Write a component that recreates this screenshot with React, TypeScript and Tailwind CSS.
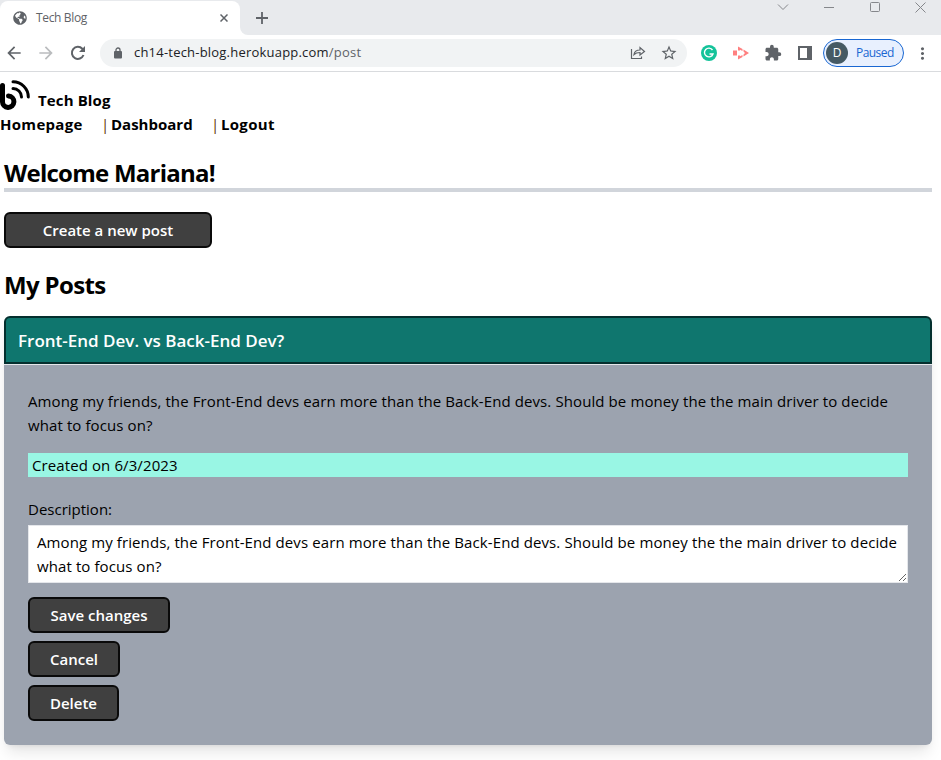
import { FaGlobeAmericas } from "react-icons/fa";
import { MdArrowBack, MdArrowForward, MdStarBorder, MdExtension, MdMoreVert } from "react-icons/md";
import type { ReactNode } from "react";

const postText =
  "Among my friends, the Front-End devs earn more than the Back-End devs. Should be money the the main driver to decide what to focus on?";

function TabStrip() {
  return (
    <div className="flex h-[35px] bg-[#e8eaed]">
      <div className="mt-px flex h-[34px] w-[240px] items-center rounded-tl-lg rounded-tr-lg bg-white pl-[13px] pr-[12px] text-[#5f6368]">
        <FaGlobeAmericas size={14} />
        <span className="ml-[9px] flex-1 text-[12px] tracking-[-0.35px]">Tech Blog</span>
        <svg className="h-2 w-2" viewBox="0 0 8 8" stroke="currentColor" strokeWidth="1.500">
          <path d="M.5 .5l7 7M7.500 .5l-7 7" />
        </svg>
      </div>
      <div className="flex h-[35px] w-2 items-end bg-white">
        <div className="h-full w-full rounded-bl-lg bg-[#e8eaed]" />
      </div>
      <svg className="ml-2 mt-3 h-3 w-3 text-[#5f6368]" viewBox="0 0 12 12" stroke="currentColor" strokeWidth="1.800">
        <path d="M0 6h12M6 0v12" />
      </svg>
      <svg className="ml-auto mr-[14px] h-[14px] w-[150px] shrink-0" viewBox="0 0 150 14" fill="none" stroke="#85878b">
        <path d="M1 4.500l5 5 5-5M47 7.500h10M138.500 2.500l10 10M148.500 2.500l-10 10" />
        <rect x="93.500" y="2.500" width="9" height="9" rx="1" />
      </svg>
    </div>
  );
}

function Toolbar() {
  return (
    <div className="flex h-[37px] items-center border-b border-[#d9dbde] bg-white text-[#5f6368]">
      <MdArrowBack size={20} stroke="currentColor" strokeWidth={0} className="ml-1" />
      <MdArrowForward size={20} className="ml-3 text-[#babcbe]" />
      <svg className="ml-[14px] h-4 w-4" viewBox="0 0 16 16" fill="none">
        <path d="M13.500 10A6 6 0 1 1 12.300 3.800L14 5.500" stroke="currentColor" strokeWidth="2" />
        <path d="M15 1v6H9z" fill="currentColor" />
      </svg>
      <div className="ml-[14px] flex h-7 w-[587px] items-center rounded-full bg-[#f1f3f4] pl-[14px] pr-[9px]">
        <svg className="h-3 w-2" viewBox="0 0 8 12" fill="none">
          <path d="M2 5V3a2 2 0 0 1 4 0v2" stroke="currentColor" strokeWidth="1.300" />
          <rect y="4" width="8" height="7.500" rx="1" fill="currentColor" />
        </svg>
        <div className="ml-[12px] flex-1 text-[13px] tracking-[0.21px] text-[#202124]">
          ch14-tech-blog.herokuapp.com<span className="text-[#5f6368]">/post</span>
        </div>
        <svg className="mr-[14px] h-4 w-4" viewBox="0 0 16 16" fill="none" stroke="currentColor" strokeWidth="1.200">
          <path d="M1.500 4v9.500h10V11.500M4 9.500c.5-3.500 2.500-4.500 6-4.500V2.500l4.500 4-4.500 3.500V7.500C7.500 7.500 5.500 8 4 9.500z" />
        </svg>
        <MdStarBorder size={18} />
      </div>
      <svg className="ml-[14px] h-4 w-4" viewBox="0 0 16 16" fill="none">
        <circle cx="8" cy="8" r="8" fill="#15c39a" />
        <path d="M11.500 5A4.400 4.400 0 1 0 12 9H8.500M12 9l-1.500 2.500" stroke="white" strokeWidth="1.400" />
      </svg>
      <svg className="ml-4 h-[14px] w-4" viewBox="0 0 16 14" fill="#ff8080">
        <path d="M0 4.500h4v5H0z" />
        <path d="M5 .5l4.500 2.500v2L7 3.700V4.500H5zM10.500 3.500L16 7l-5.500 3.500V8.500L12 7l-1.500-1.500zM5 9.500h2v.8l2.500-1.300v2L5 13.500z" />
      </svg>
      <MdExtension size={18} className="ml-[15px]" />
      <svg className="ml-[16px] h-[14px] w-[14px]" viewBox="0 0 14 14" fill="currentColor">
        <path fillRule="evenodd" d="M0 0h14v14H0zM2 2v10h7V2z" />
      </svg>
      <div className="ml-[11px] flex h-7 w-[81px] items-center rounded-full border border-[#1967d2] bg-[#e8f0fe] pl-[2px] text-[#1967d2]">
        <span className="flex h-[22px] w-[22px] items-center justify-center rounded-full bg-[#455a64] text-[12px] text-white">D</span>
        <span className="ml-[8px] text-[12px] tracking-[-0.55px]">Paused</span>
      </div>
      <MdMoreVert size={19} className="ml-[9px]" />
    </div>
  );
}

function BlogLogo() {
  return (
    <svg className="h-[30px] w-[30px]" viewBox="0 0 30 30" fill="none" stroke="black" strokeLinecap="round">
      <path d="M2.500 5.500V21.500a5.700 5.700 0 1 0 6-5.500" strokeWidth="5" strokeLinejoin="round" />
      <path d="M13 8.500A8.500 8.500 0 0 1 21.500 17M13 1.800A15.300 15.300 0 0 1 28.300 17" strokeWidth="3" />
    </svg>
  );
}

function Button({ className, children }: { className: string; children: ReactNode }) {
  return (
    <button
      className={`flex h-9 items-center justify-center rounded-md border-2 border-[#0a0a0a] bg-[#404040] text-[15px] font-semibold text-white ${className}`}
    >
      {children}
    </button>
  );
}

export default function App() {
  return (
    <div className="h-[760px] w-[941px] overflow-hidden bg-white font-['Open_Sans','Noto_Sans',sans-serif] text-black">
      <TabStrip />
      <Toolbar />
      <header className="h-[65px] pt-[8px] font-bold">
        <div className="flex h-8">
          <BlogLogo />
          <span className="ml-2 mt-2 text-[15px] leading-6 tracking-[0.13px]">Tech Blog</span>
        </div>
        <nav className="flex text-[15px] leading-6">
          <a className="w-[101px] tracking-[0.3px]">Homepage</a>
          <span className="w-[10px] font-normal text-[#5c3300]">|</span>
          <a className="w-[100px]">Dashboard</a>
          <span className="w-[10px] font-normal text-[#5c3300]">|</span>
          <a className="tracking-[0.3px]">Logout</a>
        </nav>
      </header>
      <main className="ml-1 w-[928px]">
        <h1 className="mt-5 h-[35px] border-b-4 border-[#d1d5db] text-[24px] font-bold leading-[32px] tracking-[-0.75px]">Welcome Mariana!</h1>
        <Button className="mt-5 w-[208px]">Create a new post</Button>
        <h2 className="mt-[21px] h-[47px] text-[24px] font-bold leading-[32px] tracking-[-0.65px]">My Posts</h2>
        <article className="rounded-md shadow-lg">
          <h3 className="h-12 rounded-t-md border-2 border-[#042f2e] bg-[#0f766e] pl-3 text-[17px] font-semibold leading-[45px] text-white">
            Front-End Dev. vs Back-End Dev?
          </h3>
          <div className="h-[381px] rounded-b-md border-t border-[#e5e7eb] bg-[#9ca3af] px-6 pt-6 text-[15px] leading-6 tracking-[0.1px]">
            <p>{postText}</p>
            <p className="mt-4 bg-[#99f6e4] pl-1">Created on 6/3/2023</p>
            <label className="mt-5 block tracking-normal">Description:</label>
            <textarea
              className="mt-1 block h-[58px] w-full resize overflow-hidden border border-[#e5e7eb] bg-white px-2 py-1 tracking-[0.1px]"
              defaultValue={postText}
            />
            <Button className="mt-[14px] w-[142px] tracking-normal">Save changes</Button>
            <Button className="mt-2 w-[92px] tracking-normal">Cancel</Button>
            <Button className="mt-2 w-[91px] tracking-normal">Delete</Button>
          </div>
        </article>
      </main>
    </div>
  );
}
